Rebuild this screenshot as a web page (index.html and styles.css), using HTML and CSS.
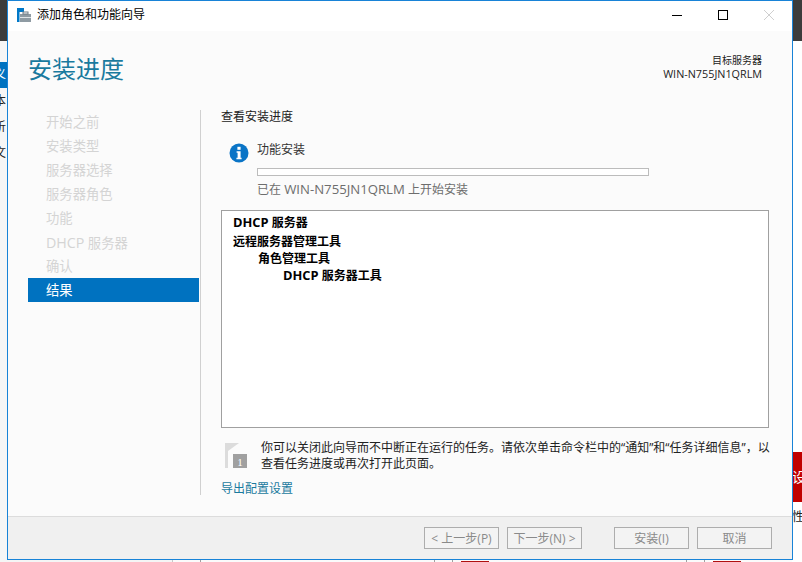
FILE: index.html
```html
<!DOCTYPE html>
<html lang="zh-CN">
<head>
<meta charset="utf-8">
<title>添加角色和功能向导</title>
<link rel="stylesheet" href="styles.css">
</head>
<body>
<div class="desktop">
  <div class="bg-left">
    <div class="bg-dark"></div>
    <div class="bg-blue">义</div>
    <div class="bg-t">本</div>
    <div class="bg-t">析</div>
    <div class="bg-t">文</div>
  </div>
  <div class="bg-right">
    <div class="bg-dark"></div>
    <div class="bg-red">设</div>
    <div class="bg-prop">性</div>
  </div>
  <div class="bottom-shade"></div>
  <div class="tick t1"></div>
  <div class="tick t2"></div>
  <div class="tick t3"></div>
  <div class="tick t4"></div>
  <div class="tick t5"></div>
  <div class="tick t6"></div>
  <div class="mark m1"></div>
  <div class="mark m2"></div>
  <div class="window">
    <header class="titlebar">
      <svg class="app-icon" width="16" height="16" viewBox="0 0 16 16"><rect x="0" y="0" width="7" height="4" fill="#0078c8"/><rect x="0" y="0" width="2.500" height="14" fill="#0078c8"/><rect x="3" y="6" width="11" height="8" fill="#8f9ba3"/><rect x="3" y="9" width="11" height="1" fill="#dfe4e7"/><rect x="6" y="4" width="5" height="2" fill="none" stroke="#6f7b83"/></svg>
      <span class="title">添加角色和功能向导</span>
      <span class="controls">
        <svg class="ctl" width="12" height="12" viewBox="0 0 12 12"><path d="M1 6.500H11" stroke="#000" fill="none"/></svg>
        <svg class="ctl" width="12" height="12" viewBox="0 0 12 12"><rect x="1.500" y="1.500" width="9" height="9" stroke="#000" fill="none"/></svg>
        <svg class="ctl" width="12" height="12" viewBox="0 0 12 12"><path d="M1 1L11 11M11 1L1 11" stroke="#cfcfcf" fill="none"/></svg>
      </span>
    </header>
    <div class="content">
      <div class="head">
        <h1>安装进度</h1>
        <div class="target"><div class="target-cap">目标服务器</div><div class="target-name">WIN-N755JN1QRLM</div></div>
      </div>
      <div class="main">
        <nav class="nav">
          <div class="nav-item">开始之前</div>
          <div class="nav-item">安装类型</div>
          <div class="nav-item">服务器选择</div>
          <div class="nav-item">服务器角色</div>
          <div class="nav-item">功能</div>
          <div class="nav-item"><span class="lat">DHCP</span> 服务器</div>
          <div class="nav-item">确认</div>
          <div class="nav-item active">结果</div>
        </nav>
        <section class="pane">
          <div class="pane-title">查看安装进度</div>
          <div class="status">
            <svg class="info" width="20" height="20" viewBox="0 0 20 20"><circle cx="10" cy="10" r="9.500" fill="#0a74c6"/><rect x="8.400" y="3.800" width="3.200" height="3" fill="#fff"/><path d="M7.600 8.200h4v6.600h1v1.500H7.400v-1.500h1.200V9.700h-1z" fill="#fff"/></svg>
            <div class="status-body">
              <div class="status-name">功能安装</div>
              <div class="progress"></div>
              <div class="status-msg">已在 <span class="lat">WIN-N755JN1QRLM</span> 上开始安装</div>
            </div>
          </div>
          <div class="results">
            <div class="r r0 first"><span class="lat">DHCP</span> 服务器</div>
            <div class="r r0 second">远程服务器管理工具</div>
            <div class="r r1">角色管理工具</div>
            <div class="r r2"><span class="lat">DHCP</span> 服务器工具</div>
          </div>
          <div class="note">
            <svg class="flag" width="22" height="26" viewBox="0 0 22 26"><path d="M0 0h14L3 8v17H0z" fill="#dcdcdc"/><rect x="8" y="11" width="14" height="14" fill="#a0a0a0"/><text x="15" y="22.500" class="flag-num">1</text></svg>
            <p>你可以关闭此向导而不中断正在运行的任务。请依次单击命令栏中的“通知”和“任务详细信息”，以查看任务进度或再次打开此页面。</p>
          </div>
          <a class="export">导出配置设置</a>
        </section>
      </div>
    </div>
    <footer class="footer">
      <span class="btn">&lt; 上一步(P)</span>
      <span class="btn next">下一步(N) &gt;</span>
      <span class="btn install">安装(I)</span>
      <span class="btn">取消</span>
    </footer>
  </div>
</div>
</body>
</html>
```

FILE: styles.css
```css
html, body { margin: 0; padding: 0; }
body { width: 802px; height: 562px; overflow: hidden; font-family: "Open Sans", "Noto Sans CJK SC", sans-serif; font-size: 12px; color: #000; }
.desktop { position: relative; width: 802px; height: 562px; background: #fbfbfb; overflow: hidden; }
.bg-left { position: absolute; left: 0; top: 0; width: 8px; height: 562px; background: #f6f6f6; overflow: hidden; }
.bg-dark { height: 41px; background: #3c3c3c; }
.bg-blue { margin-top: 21px; height: 26px; line-height: 26px; background: #0072c0; color: #fff; text-indent: -6px; white-space: nowrap; }
.bg-t { height: 26px; line-height: 26px; text-indent: -6px; color: #222; }
.bg-right { position: absolute; right: 0; top: 0; width: 10px; height: 562px; background: #fff; overflow: hidden; }
.bg-red { margin-top: 411px; height: 50px; line-height: 50px; background: #c00000; color: #fff; font-size: 14px; }
.bg-prop { margin-top: 5px; color: #222; }
.bottom-shade { position: absolute; left: 0; top: 560px; width: 172px; height: 2px; background: #f5f5f5; }
.tick { position: absolute; top: 560px; width: 1px; height: 2px; background: #a0a0a0; }
.t1 { left: 172px; background: #c8c8c8; }
.t2 { left: 200px; }
.t3 { left: 434px; }
.t4 { left: 452px; }
.t5 { left: 686px; }
.t6 { left: 704px; }
.mark { position: absolute; top: 561px; width: 28px; height: 1px; background: #b01010; }
.m1 { left: 461px; }
.m2 { left: 713px; }
.window { position: absolute; left: 7px; top: 0; width: 786px; height: 560px; box-sizing: border-box; border: 1px solid #1883d7; display: flex; flex-direction: column; background: #fbfbfb; }
.titlebar { height: 30px; flex: none; background: #fff; display: flex; align-items: center; padding-left: 9px; }
.app-icon { margin-right: 4px; }
.title { font-size: 12px; margin-bottom: 2px; line-height: 16px; }
.controls { margin-left: auto; margin-bottom: 2px; display: flex; gap: 34px; padding-right: 17px; }
.ctl { display: block; }
.content { flex: 1; display: flex; flex-direction: column; min-height: 0; }
.head { height: 79px; display: flex; justify-content: space-between; padding: 0 30px 0 20px; }
h1 { margin: 18px 0 0; font-size: 24px; font-weight: 400; line-height: 40px; color: #1a7a9e; }
.target { margin-top: 23px; text-align: right; line-height: 13px; color: #222; }
.target-cap { font-size: 10px; }
.target-name { font-size: 10.800px; }
.lat { font-size: 1.070em; }
.main { display: flex; flex: 1; min-height: 0; }
.nav { width: 171px; padding-right: 1px; margin-left: 20px; height: 385px; border-right: 1px solid #d0d0d0; }
.nav-item { height: 24px; line-height: 25px; padding-left: 18px; color: #d4d4d4; font-size: 13.330px; }
.active { background: #0072c0; color: #fff; }
.pane { flex: 1; padding-left: 20px; display: flex; flex-direction: column; }
.pane-title { font-size: 12px; line-height: 14px; color: #222; }
.status { display: flex; margin: 17px 0 0 8px; }
.info { margin-top: 2px; flex: none; }
.status-body { margin-left: 8px; }
.status-name { line-height: 18px; color: #333; }
.progress { width: 390px; height: 6px; margin-top: 9px; border: 1px solid #bcbcbc; background: #fff; }
.status-msg { margin-top: 5px; line-height: 16px; color: #6d6d6d; }
.status-msg .lat { font-size: 1.100em; }
.results { width: 546px; height: 216px; margin-top: 12px; border: 1px solid #a0a0a0; background: #fff; flex: none; }
.r { font-weight: 700; line-height: 17px; }
.r0 { padding-left: 11px; }
.first { margin-top: 3px; }
.second { margin-top: 2px; }
.r1 { padding-left: 36px; }
.r2 { padding-left: 61px; }
.note { display: flex; margin-top: 12px; padding-left: 4px; width: 550px; }
.flag { flex: none; margin-top: 3px; }
.flag-num { font-family: "Liberation Serif", serif; font-size: 11px; fill: #fff; text-anchor: middle; }
.note p { margin: 0 0 0 14px; line-height: 16px; color: #222; width: 514px; }
.export { margin-top: 9px; color: #1a7a9e; line-height: 16px; }
.footer { height: 43px; flex: none; background: #f0f0f0; border-top: 1px solid #dcdcdc; display: flex; align-items: flex-start; padding: 10px 0 0 416px; box-sizing: border-box; }
.btn { box-sizing: border-box; width: 75px; height: 22px; border: 1px solid #adadad; background: #f3f3f3; color: #8a8a8a; text-align: center; line-height: 21px; margin-right: 8px; white-space: nowrap; }
.next { margin-right: 32px; }
.install { margin-right: 8px; }
```
